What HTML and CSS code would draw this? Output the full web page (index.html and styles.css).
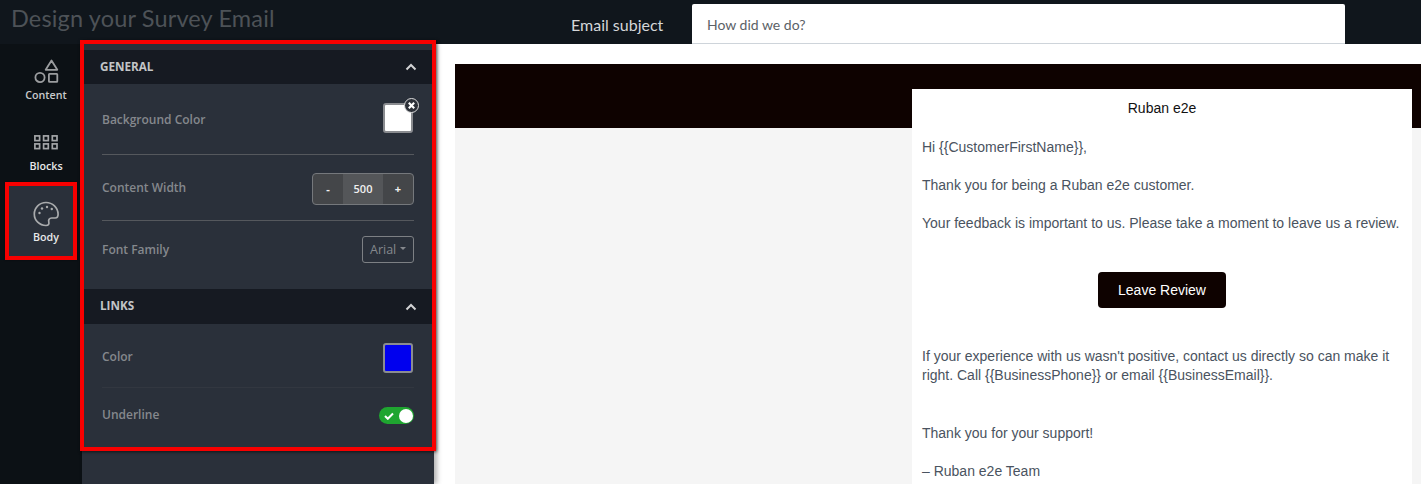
FILE: index.html
```html
<!DOCTYPE html>
<html lang="en">
<head>
<meta charset="utf-8">
<title>Design your Survey Email</title>
<link rel="stylesheet" href="styles.css">
</head>
<body>
<div class="app">
  <header class="topbar">
    <h1 class="title">Design your Survey Email</h1>
    <label class="subject-label">Email subject</label>
    <div class="subject-input">How did we do?</div>
  </header>
  <div class="main">
    <nav class="rail">
      <div class="rail-item">
        <svg class="rail-icon" viewBox="0 0 26 26" fill="none" stroke="#9b9d9f" stroke-width="1.8">
          <path d="M18.500 1.500 L24.300 10.800 H12.700 Z" stroke-linejoin="round"/>
          <circle cx="7" cy="18.500" r="4.600"/>
          <rect x="15.900" y="14.900" width="8.400" height="8" rx="0.600"/>
        </svg>
        <span>Content</span>
      </div>
      <div class="rail-item">
        <svg class="rail-icon" viewBox="0 0 26 26" fill="none" stroke="#a4a6a8" stroke-width="1.700">
          <rect x="1.900" y="5.900" width="4.700" height="4.700"/>
          <rect x="10.600" y="5.900" width="4.700" height="4.700"/>
          <rect x="19.300" y="5.900" width="4.700" height="4.700"/>
          <rect x="1.900" y="13.900" width="4.700" height="4.700"/>
          <rect x="10.600" y="13.900" width="4.700" height="4.700"/>
          <rect x="19.300" y="13.900" width="4.700" height="4.700"/>
        </svg>
        <span>Blocks</span>
      </div>
      <div class="rail-item active">
        <svg class="rail-icon" viewBox="0 0 26 26" fill="none" stroke="#a9abad" stroke-width="1.700">
          <path d="M13 1.500C6.500 1.500 1.300 6.500 1.300 13S6.500 24.500 13 24.500c2.600 0 3.300-1.700 2.800-3.500-.6-2.100.5-4 2.800-4h3.500c1.900 0 3-1.500 3-3.800C25 6.500 19.500 1.500 13 1.500Z"/>
          <g fill="#a9abad" stroke="none">
            <circle cx="6.500" cy="12" r="1.200"/>
            <circle cx="9" cy="7.500" r="1.200"/>
            <circle cx="14" cy="6" r="1.200"/>
            <circle cx="18.800" cy="8" r="1.200"/>
          </g>
        </svg>
        <span>Body</span>
      </div>
    </nav>
    <aside class="panel">
      <section>
        <div class="section-head">
          <span>GENERAL</span>
          <svg class="chev" viewBox="0 0 12 8" fill="none" stroke="#d2d3d5" stroke-width="2"><path d="M1.500 6.500 6 2l4.500 4.500"/></svg>
        </div>
        <div class="row row-bg">
          <span class="row-label">Background Color</span>
          <div class="swatch swatch-white"><span class="clear">
            <svg viewBox="0 0 10 10" stroke="#fff" stroke-width="2.400"><path d="M2 2l6 6M8 2l-6 6"/></svg>
          </span></div>
        </div>
        <div class="row row-width">
          <span class="row-label">Content Width</span>
          <div class="stepper">
            <span class="step">-</span><span class="step-value">500</span><span class="step">+</span>
          </div>
        </div>
        <div class="row row-font">
          <span class="row-label">Font Family</span>
          <div class="dropdown">Arial<i class="caret"></i></div>
        </div>
      </section>
      <section>
        <div class="section-head section-head-links">
          <span>LINKS</span>
          <svg class="chev" viewBox="0 0 12 8" fill="none" stroke="#d2d3d5" stroke-width="2"><path d="M1.500 6.500 6 2l4.500 4.500"/></svg>
        </div>
        <div class="row row-color">
          <span class="row-label">Color</span>
          <div class="swatch swatch-blue"></div>
        </div>
        <div class="row row-underline">
          <span class="row-label">Underline</span>
          <div class="toggle">
            <svg viewBox="0 0 10 8" fill="none" stroke="#fff" stroke-width="2"><path d="M1 4l2.800 2.800L9 1.500"/></svg>
            <i class="knob"></i>
          </div>
        </div>
      </section>
    </aside>
    <div class="canvas">
      <div class="email-wrap">
        <div class="email-band"></div>
        <div class="email-body">
          <div class="email-card">
            <div class="brand">Ruban e2e</div>
            <p class="line first">Hi {{CustomerFirstName}},</p>
            <p class="line">Thank you for being a Ruban e2e customer.</p>
            <p class="line">Your feedback is important to us. Please take a moment to leave us a review.</p>
            <div class="cta-wrap"><span class="cta">Leave Review</span></div>
            <p class="line">If your experience with us wasn't positive, contact us directly so can make it right. Call {{BusinessPhone}} or email {{BusinessEmail}}.</p>
            <p class="line thanks">Thank you for your support!</p>
            <p class="line">– Ruban e2e Team</p>
          </div>
        </div>
      </div>
    </div>
  </div>
  <div class="mark mark-body"></div>
  <div class="mark mark-panel"></div>
</div>
</body>
</html>
```
FILE: styles.css
```css
* { box-sizing: border-box; }
html, body { margin: 0; padding: 0; height: 100%; overflow: hidden; }
body { background: #fff; font-family: "Open Sans", sans-serif; }
.app { position: relative; width: 1421px; height: 484px; overflow: hidden; display: flex; flex-direction: column; }

.topbar { flex: 0 0 44px; height: 44px; background: #10161c; display: flex; align-items: flex-start; }
.title { margin: 4px 0 0 11px; width: 560px; font: 400 23.5px/28px Lato, sans-serif; color: #4d5257; letter-spacing: 0.15px; }
.subject-label { width: 121px; margin-top: 15px; font: 400 16px/20px Lato, sans-serif; color: #d5d7d9; }
.subject-input { width: 653px; height: 40px; margin-top: 4px; padding: 0 15px; background: #fff; border-bottom: 1px solid #ced4da; border-radius: 2px 2px 0 0; font: 400 14px/41px Lato, sans-serif; color: #5b6166; }

.main { flex: 1; display: flex; min-height: 0; }
.rail { flex: 0 0 82px; background: #0c1115; padding-top: 4px; display: flex; flex-direction: column; align-items: stretch; }
.rail-item { height: 71px; width: 70px; margin-left: 6px; padding: 11px 0 0 10px; display: flex; flex-direction: column; align-items: center; color: #e8e8e9; font: 600 10.700px/15px "Open Sans", sans-serif; }
.rail-item span { margin-top: 3px; }
.rail-item:first-child { color: #c9cacb; }
.rail-icon { width: 26px; height: 26px; display: block; }
.rail-item.active { background: #2a303a; height: 74px; margin-top: -4px; padding-top: 15px; }

.panel { flex: 0 0 352px; background: #2a303a; padding-top: 6px; box-shadow: 3px 0 5px rgba(0,0,0,.3); position: relative; }
.section-head { height: 34px; padding: 0 17px 0 18px; background: #161a22; display: flex; align-items: center; justify-content: space-between; font: 700 11.700px/16px "Open Sans", sans-serif; color: #c3c5c7; }
.section-head span { margin-bottom: 2px; }
.section-head-links { height: 35px; }
.section-head-links span { margin-bottom: 4px; }
.chev { width: 12px; height: 8px; display: block; }
.row { margin: 0 20px; display: flex; align-items: center; justify-content: space-between; }
.row-label { font: 600 12px/16px "Open Sans", sans-serif; color: #85888d; }
.row-bg { height: 71px; border-bottom: 1px solid #55585d; }
.row-bg .row-label { margin-top: 2px; }
.row-bg .swatch { margin-bottom: 3px; }
.row-width { height: 66px; border-bottom: 1px solid #55585d; }
.row-font { height: 68px; padding-bottom: 11px; }
.row-color { height: 64px; padding-top: 4px; border-bottom: 1px solid #323740; }
.row-color .row-label { margin-bottom: 2px; }
.row-underline { height: 55px; }
.row-underline .row-label { margin-bottom: 2px; }

.swatch { position: relative; width: 30px; height: 30px; margin-right: 1px; border: 2px solid #8a8c90; border-radius: 3px; }
.swatch-white { background: #fff; }
.swatch-blue { background: #0000ee; }
.clear { position: absolute; top: -7px; right: -8px; width: 15px; height: 15px; border-radius: 50%; background: #2d3139; border: 1px solid #dcdcdc; display: flex; align-items: center; justify-content: center; }
.clear svg { width: 9px; height: 9px; display: block; }

.stepper { width: 102px; height: 32px; margin-top: 2px; border: 1px solid #75787c; border-radius: 4px; overflow: hidden; display: flex; background: #444649; color: #f0f0f0; font: 600 11px/30px "Open Sans", sans-serif; text-align: center; }
.step { flex: 1; font-weight: 700; }
.step-value { flex: 0 0 40px; background: #545659; }

.dropdown { width: 52px; height: 27px; border: 1px solid #7d8084; border-radius: 3px; color: #85888d; font: 400 12.500px/25px "Open Sans", sans-serif; padding-left: 7px; display: flex; align-items: center; }
.caret { width: 0; height: 0; margin: -2px 0 0 4px; border: 3.500px solid transparent; border-top-color: #85888d; border-bottom-width: 0; }

.toggle { width: 35px; height: 17px; background: #1fa530; border-radius: 9px; position: relative; display: flex; align-items: center; padding-left: 5px; }
.toggle svg { width: 10px; height: 8px; display: block; }
.knob { position: absolute; top: 1.500px; right: 1px; width: 14px; height: 14px; border-radius: 50%; background: #fff; }

.canvas { flex: 1; min-width: 0; padding: 20px 0 0 21px; background: #fff; }
.email-wrap { position: relative; height: 420px; background: #f5f5f5; }
.email-band { height: 64px; background: #0e0200; }
.email-body { position: absolute; top: 25px; left: 457px; width: 500px; }
.email-card { background: #fff; padding: 0 10px; height: 400px; font: 400 14px/19px "Liberation Sans", Arial, sans-serif; color: #4a5360; }
.brand { height: 39px; padding-top: 10px; text-align: center; color: #111; font-size: 14px; line-height: 18px; }
.line { margin: 0 0 19px; }
.first { margin-top: 10px; }
.cta-wrap { height: 36px; margin: 39px 0 39px; display: flex; justify-content: center; }
.cta { width: 128px; height: 36px; border-radius: 4px; background: #0e0200; color: #fff; text-align: center; font: 400 14px/36px "Liberation Sans", Arial, sans-serif; }
.thanks { margin-top: 39px; }

.mark { position: absolute; border-style: solid; border-color: #f80000; pointer-events: none; }
.mark-body { left: 5px; top: 182px; width: 72px; height: 78px; border-width: 4px; box-shadow: 0 0 2px rgba(0,0,0,.4); }
.mark-panel { left: 80px; top: 40px; width: 356px; height: 411px; border-width: 4px; box-shadow: 1px 1px 3px rgba(0,0,0,.6); }
```
